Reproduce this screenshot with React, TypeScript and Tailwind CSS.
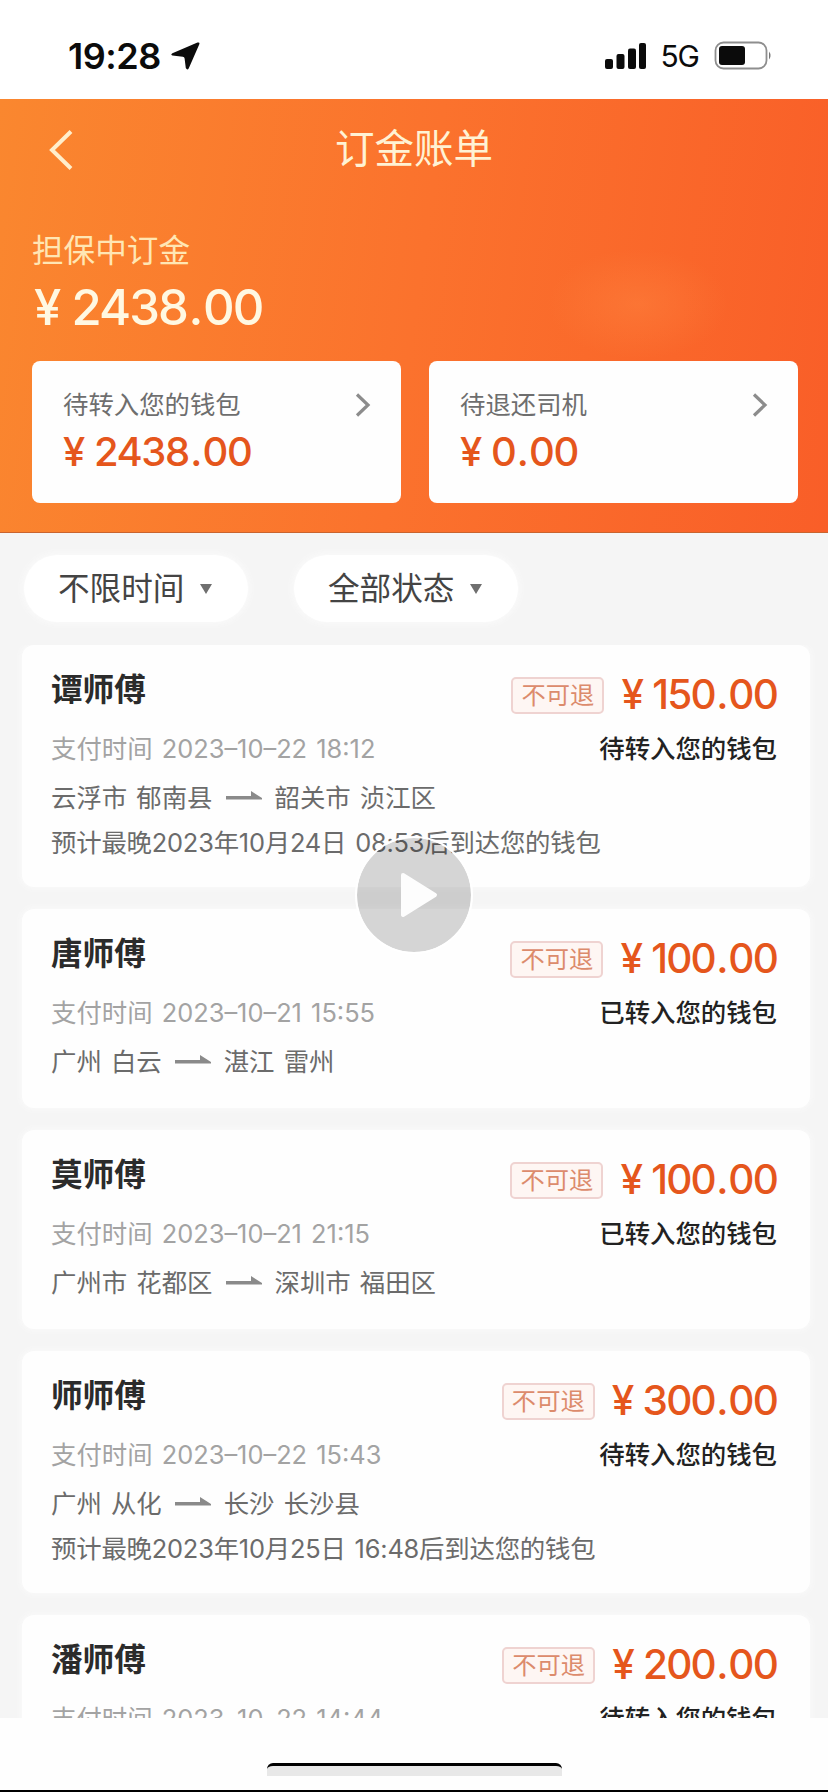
import React from "react";

interface Bill {
  name: string;
  amount: string;
  paidAt: string;
  status: string;
  from: string;
  to: string;
  arrival?: string;
}

const bills: Bill[] = [
  {
    name: "谭师傅",
    amount: "150.00",
    paidAt: "2023–10–22 18:12",
    status: "待转入您的钱包",
    from: "云浮市 郁南县",
    to: "韶关市 浈江区",
    arrival: "预计最晚2023年10月24日 08:53后到达您的钱包",
  },
  {
    name: "唐师傅",
    amount: "100.00",
    paidAt: "2023–10–21 15:55",
    status: "已转入您的钱包",
    from: "广州 白云",
    to: "湛江 雷州",
  },
  {
    name: "莫师傅",
    amount: "100.00",
    paidAt: "2023–10–21 21:15",
    status: "已转入您的钱包",
    from: "广州市 花都区",
    to: "深圳市 福田区",
  },
  {
    name: "师师傅",
    amount: "300.00",
    paidAt: "2023–10–22 15:43",
    status: "待转入您的钱包",
    from: "广州 从化",
    to: "长沙 长沙县",
    arrival: "预计最晚2023年10月25日 16:48后到达您的钱包",
  },
  {
    name: "潘师傅",
    amount: "200.00",
    paidAt: "2023–10–22 14:44",
    status: "待转入您的钱包",
    from: "广州 白云",
    to: "深圳 宝安",
  },
];

function StatusBar() {
  return (
    <div className="flex h-[99px] shrink-0 items-center justify-between bg-white pt-3 pr-[56px] pl-[68px] text-[#0b0b0b]">
      <div className="flex items-center gap-[10px]">
        <span className="text-[36px] leading-none font-semibold tracking-[-0.5px]">
          19:28
        </span>
        <svg width="29" height="28" viewBox="0 0 29 28" fill="currentColor">
          <path d="M26.5 .6Q29.200 -.2 28.200 2.500L17.800 26.200Q16.300 28.800 14.800 26L13.600 16.500Q13.400 14.900 11.800 14.700L1.400 13.600Q-.8 12.600 1.400 11.200Z" />
        </svg>
      </div>
      <div className="flex items-center">
        <svg width="42" height="28" viewBox="0 0 42 28" fill="currentColor">
          <rect x="0" y="17" width="8" height="10" rx="2" />
          <rect x="11.500" y="12" width="8" height="15" rx="2" />
          <rect x="23" y="6.500" width="8" height="20.500" rx="2" />
          <rect x="34" y="1" width="7" height="26" rx="2" />
        </svg>
        <span className="ml-[13px] text-[30px] leading-none tracking-[-1px]">
          5G
        </span>
        <svg
          className="ml-[15px]"
          width="58"
          height="29"
          viewBox="0 0 58 29"
          fill="currentColor"
        >
          <rect
            x="1.500"
            y="1.500"
            width="51"
            height="26"
            rx="8"
            fill="none"
            stroke="#8e8e8e"
            strokeWidth="1.800"
          />
          <rect x="5" y="5" width="26" height="19" rx="3" />
          <path d="M55 10.500Q58 14.500 55 18.500Z" fill="#777" />
        </svg>
      </div>
    </div>
  );
}

function Amount({ value }: { value: string }) {
  const [yuan, cents] = value.split(".");
  return (
    <span>
      {yuan}
      <span className="mx-[1.5px]">.</span>
      {cents}
    </span>
  );
}

function WalletCard({ label, amount }: { label: string; amount: string }) {
  return (
    <div className="h-[142px] flex-1 rounded-[8px] bg-[#fefefe] pt-[25px] pr-[30px] pl-[31px]">
      <div className="flex h-[38px] items-center justify-between">
        <span className="text-[25.4px] leading-none text-[#6e6e6e]">
          {label}
        </span>
        <svg width="16" height="24" viewBox="0 0 16 24" fill="none">
          <path d="M2 1.500L13 12L2 22.500" stroke="#8c8c8c" strokeWidth="3.200" />
        </svg>
      </div>
      <div className="mt-[4px] flex h-[48px] items-center gap-[10px] text-[40px] leading-none font-medium tracking-[-1.4px] text-[#e5561c]">
        <span>¥</span>
        <Amount value={amount} />
      </div>
    </div>
  );
}

function Header() {
  return (
    <div className="relative h-[434px] shrink-0 border-b border-[#c9642f] bg-linear-[98deg] from-[#fa872f] via-[#fb722d] to-[#f95e28] pr-[30px] pl-[32px] text-[#fff2d4]">
      <div className="absolute top-[150px] right-[100px] h-[110px] w-[180px] bg-[radial-gradient(closest-side,rgba(255,140,70,0.350),transparent)]" />
      <div className="flex h-[101px] items-center">
        <svg
          className="ml-[17px]"
          width="26"
          height="42"
          viewBox="0 0 26 42"
          fill="none"
        >
          <path
            d="M22 2.500L3 21L22 39.500"
            stroke="#ffeecb"
            strokeWidth="4"
          />
        </svg>
        <h1 className="flex-1 pt-px pr-[45px] text-center text-[39.5px] leading-none">
          订金账单
        </h1>
      </div>
      <div className="mt-[28px] flex h-[44px] items-center pt-[1px] text-[31.6px] leading-none text-[#ffe6b4]">
        担保中订金
      </div>
      <div className="mt-[5px] flex h-[60px] items-center gap-[12px] pl-[2px] text-[49px] leading-none font-medium tracking-[-1.9px] text-[#fff8e2]">
        <span>¥</span>
        <Amount value="2438.00" />
      </div>
      <div className="mt-[24px] flex gap-[28px]">
        <WalletCard label="待转入您的钱包" amount="2438.00" />
        <WalletCard label="待退还司机" amount="0.00" />
      </div>
    </div>
  );
}

function FilterPill({ label }: { label: string }) {
  return (
    <button className="flex h-[67px] w-[224px] items-center rounded-full bg-white pl-[34px] text-[31.6px] leading-none text-[#444] shadow-[0_0_6px_2px_#fafafa]">
      <span>{label}</span>
      <svg className="ml-[16px]" width="12" height="10" viewBox="0 0 12 10">
        <path d="M0 0H12L6 10Z" fill="#6f6f6f" />
      </svg>
    </button>
  );
}

function BillCard({ bill }: { bill: Bill }) {
  return (
    <div className="shrink-0 rounded-[12px] bg-[#fefefe] pt-[24px] pr-[33px] pb-[24px] pl-[29px] shadow-[0_0_6px_1px_#fafafa]">
      <div className="flex h-[52px] justify-between">
        <span className="pt-[5px] text-[31.6px] leading-none font-bold text-[#2b2b2b]">
          {bill.name}
        </span>
        <div className="flex items-center">
          <span className="flex h-[37px] w-[93px] items-center justify-center rounded-[5px] border-2 border-[#efd3d1] bg-[#fef6f3] text-[24.3px] leading-none text-[#dc8b6c]">
            不可退
          </span>
          <div className="ml-[17px] flex gap-[10px] text-[40.5px] leading-none font-medium tracking-[-1.8px] text-[#e5561c]">
            <span>¥</span>
            <Amount value={bill.amount} />
          </div>
        </div>
      </div>
      <div className="mt-[9px] flex h-[38px] items-center justify-between text-[25.4px] leading-none">
        <span className="text-[#a3a3a3] [word-spacing:2px]">
          支付时间 {bill.paidAt}
        </span>
        <span className="font-medium text-[#222]">{bill.status}</span>
      </div>
      <div className="mt-[7px] flex h-[45px] items-center text-[25.4px] leading-none text-[#6b6b6b] [word-spacing:2px]">
        <span>{bill.from}</span>
        <svg
          className="mr-[13px] mb-[3px] ml-[13px]"
          width="36"
          height="12"
          viewBox="0 0 36 12"
          fill="#8a8a8a"
        >
          <path d="M0 6H25V1L36 8V9.500H0Z" />
        </svg>
        <span>{bill.to}</span>
      </div>
      {bill.arrival && (
        <div className="mt-[2px] flex h-[41px] items-center text-[25.4px] leading-none tracking-[-0.2px] whitespace-nowrap text-[#6b6b6b] [word-spacing:2px]">
          {bill.arrival}
        </div>
      )}
    </div>
  );
}

export default function App() {
  return (
    <div className="relative flex h-[1792px] w-[828px] flex-col overflow-hidden bg-[#f5f5f5] font-[Inter,'Noto_Sans_CJK_SC',sans-serif]">
      <StatusBar />
      <Header />
      <div className="flex shrink-0 gap-[46px] pt-[22px] pb-[23px] pl-[24px]">
        <FilterPill label="不限时间" />
        <FilterPill label="全部状态" />
      </div>
      <div className="flex h-[1073px] shrink-0 flex-col gap-[22px] overflow-hidden pr-[18px] pl-[22px]">
        {bills.map((bill) => (
          <BillCard key={bill.name} bill={bill} />
        ))}
      </div>
      <div className="flex flex-1 flex-col items-center justify-end border-b-2 border-black bg-[#fefefe] pb-[14px]">
        <div className="h-[13px] w-[295px] rounded-t-[6px] border-t-[3px] border-black bg-[#e8e8e8]" />
      </div>
      {/* play overlay */}
      <div className="absolute top-[836px] left-[355px] flex size-[118px] items-center justify-center rounded-full border-2 border-white bg-black/16 bg-clip-padding">
        <svg className="ml-[10px]" width="40" height="48" viewBox="0 0 40 48">
          <path
            d="M4 4L36 24L4 44Z"
            fill="#fdfdfd"
            stroke="#fdfdfd"
            strokeWidth="4"
            strokeLinejoin="round"
          />
        </svg>
      </div>
    </div>
  );
}
